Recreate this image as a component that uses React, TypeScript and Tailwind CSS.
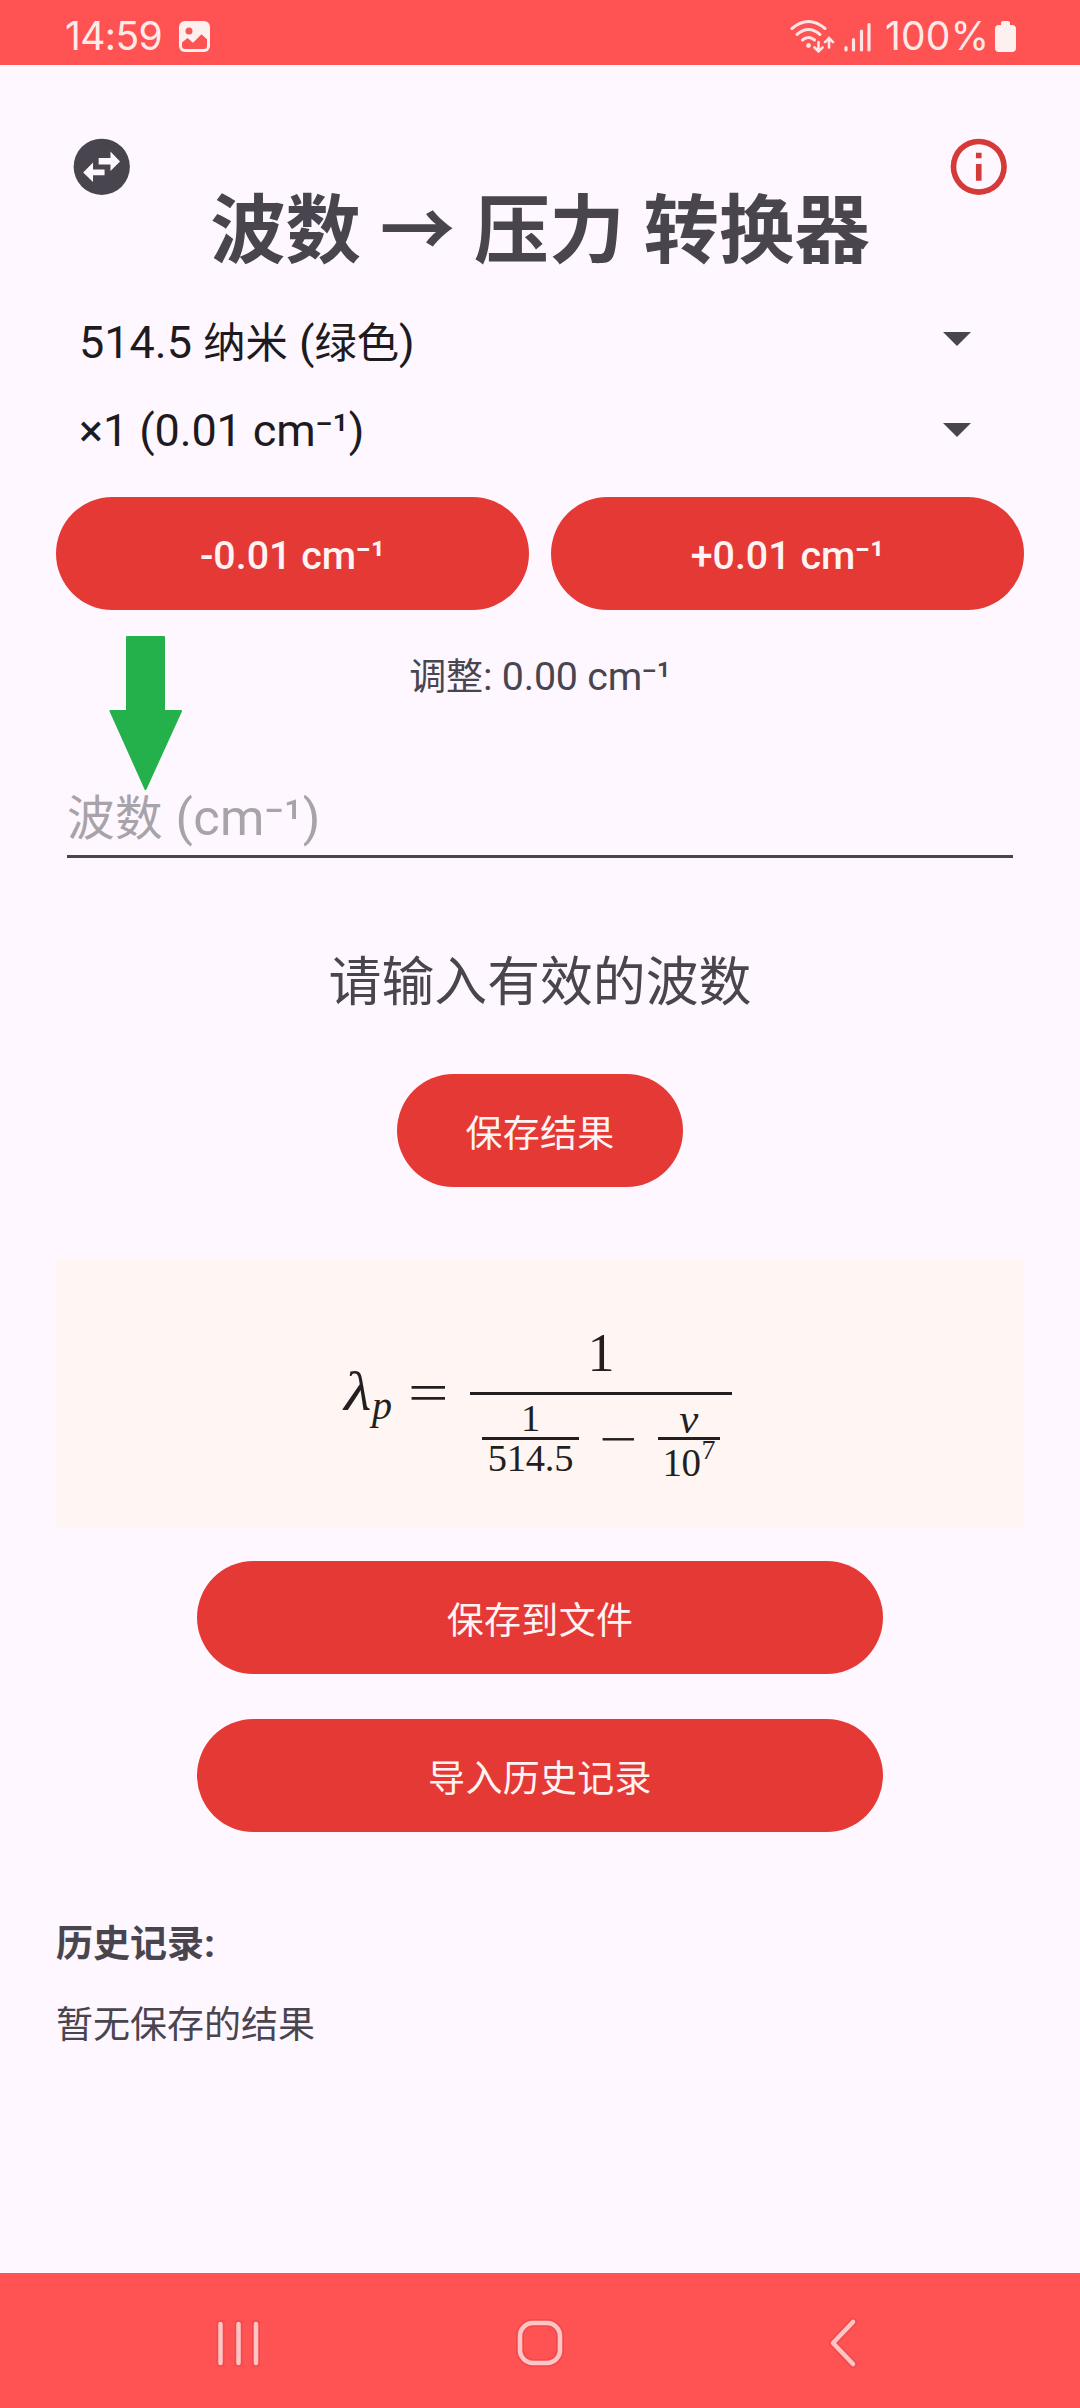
import type { ReactNode } from "react";

/** Chinese run, slightly smaller than the Latin text around it. */
function Zh({ children }: { children: ReactNode }) {
  return <span className="text-[0.94em] leading-[0]">{children}</span>;
}

function StatusBar() {
  return (
    <header className="flex h-[65px] items-center bg-[#ff5252] pl-[65px] pr-[64px] text-[#ffeaea]">
      <span className="mt-[6px] w-[102px] whitespace-nowrap font-[Inter] text-[39px] leading-[44px] tracking-[-0.6px]">14:59</span>
      <svg className="ml-[12px] mt-[8px] h-[31px] w-[31px]" viewBox="0 0 31 31">
        <rect width="31" height="31" rx="6" fill="#fff0f0" />
        <circle cx="10" cy="10" r="3.5" fill="#f45757" />
        <path d="M3 21.5 8.5 17l5.5 4.8 8.5-8.6 5.5 5V25q0 3-3 3H6q-3 0-3-3Z" fill="#ff5252" />
      </svg>
      <div className="ml-auto flex items-center">
        <svg className="mt-[6px] h-[34px] w-[84px]" viewBox="0 0 84 34" fill="none" stroke="#ffe6e6" strokeLinecap="round">
          <g strokeWidth="3">
            <path d="M3 9.5q16.500-14 33 0" />
            <path d="M8 15.500q11.500-10 23 0" />
            <path d="M13.500 21q6-5 12 0" />
            <path d="M29.500 23v9m-4-3.500 4 3.800 4-3.800M40 28.500v-9m-4 3.600 4-4 4 4" strokeWidth="2.600" />
            <path d="M57 28.500v2.500M64.500 20.500v10.500M72.500 12v19M80 5.500v25.500" strokeWidth="3.200" />
          </g>
          <circle cx="19.500" cy="26.500" r="2.400" fill="#ffe6e6" stroke="none" />
        </svg>
        <span className="ml-[12px] mt-[6px] w-[110px] whitespace-nowrap font-[Inter] text-[39px] leading-[44px] tracking-[0.2px]">100%</span>
        <svg className="mt-[7px] h-[31px] w-[21px]" viewBox="0 0 21 31">
          <path d="M6 4V2q0-2 2-2h5q2 0 2 2v2h2q4 0 4 4v19q0 4-4 4H4q-4 0-4-4V8q0-4 4-4Z" fill="#fff0f0" />
        </svg>
      </div>
    </header>
  );
}

function Spinner({ children, caret }: { children: ReactNode; caret: string }) {
  return (
    <button className="flex h-[60px] w-full items-start justify-between pl-[23px] pr-[53px] text-left text-[45px] leading-[60px] text-[#1d1b20]">
      <span className="whitespace-pre">{children}</span>
      <svg className={caret} viewBox="0 0 28 14">
        <path d="M0 0h28L14 14Z" fill="#49454f" />
      </svg>
    </button>
  );
}

function Pill({ children, size }: { children: ReactNode; size: string }) {
  return (
    <button className={`flex h-[113px] items-center justify-center rounded-full bg-[#e53935] text-[39.375px] text-[#fff3f3] ${size}`}>
      <span className="mt-[4px] whitespace-pre">{children}</span>
    </button>
  );
}

function Formula() {
  return (
    <section className="mt-[73px] flex h-[267px] justify-center bg-[#fff5f3] font-['Liberation_Serif'] text-[#231f20]">
      <div className="flex w-[392px]">
        <div className="relative w-[64px] italic">
          <span className="mt-[104px] block origin-left scale-x-[1.15] text-[55px] leading-[55px]">λ</span>
          <span className="absolute left-[28px] top-[126px] text-[40px] leading-[40px]">p</span>
        </div>
        <span className="mt-[106px] h-[54px] w-[62px] origin-left scale-x-[1.33] text-[54px] leading-[54px]">=</span>
        <div className="flex w-[262px] flex-col items-center">
          <span className="mt-[66px] h-[66px] text-[54px] leading-[54px]">1</span>
          <div className="h-[3px] w-full bg-current" />
          <div className="flex w-full justify-between px-[12px]">
            <div className="flex w-[97px] flex-col items-center text-[38.500px] leading-[39px]">
              <span className="mt-[4px] h-[38px]">1</span>
              <div className="h-[3px] w-full bg-current" />
              <span className="-mt-px tracking-[-0.2px]">514.5</span>
            </div>
            <span className="mt-[19px] h-[50px] scale-x-[1.35] text-[50px] leading-[50px]">−</span>
            <div className="flex w-[62px] flex-col items-center text-[39px] leading-[39px]">
              <span className="mt-[5px] h-[37px] scale-x-[1.1] italic">ν</span>
              <div className="h-[3px] w-full bg-current" />
              <span className="relative mt-[3px] -ml-[15px] tracking-[-0.6px]">
                10
                <span className="absolute left-full -top-[7px] ml-px text-[28px] leading-[28px]">7</span>
              </span>
            </div>
          </div>
        </div>
      </div>
    </section>
  );
}

function NavBar() {
  return (
    <nav className="mt-auto flex h-[135px] items-center justify-between bg-[#ff5252] px-[214px]">
      <svg className="mt-[5px] h-[52px] w-[50px]" viewBox="0 0 50 52" fill="none" strokeLinecap="round">
        <path d="M6.500 7v39M24.500 7v39M42 7v39" stroke="#f04c4e" strokeWidth="8" />
        <path d="M6.500 7v39M24.500 7v39M42 7v39" stroke="#ffc4c4" strokeWidth="4.500" />
      </svg>
      <svg className="-ml-[9px] mt-[5px] h-[52px] w-[52px]" viewBox="0 0 52 52" fill="none">
        <rect x="6" y="6" width="40" height="40" rx="13" stroke="#f04c4e" strokeWidth="8" />
        <rect x="6" y="6" width="40" height="40" rx="13" stroke="#ffc4c4" strokeWidth="4.500" />
      </svg>
      <svg className="mt-[5px] h-[54px] w-[41px]" viewBox="0 0 41 54" fill="none" strokeLinecap="round" strokeLinejoin="round">
        <path d="M28 6 8 27l20 21" stroke="#f04c4e" strokeWidth="8" />
        <path d="M28 6 8 27l20 21" stroke="#ffc4c4" strokeWidth="4.500" />
      </svg>
    </nav>
  );
}

export default function App() {
  return (
    <div className="flex h-[2408px] w-[1080px] flex-col overflow-hidden bg-[#fef7ff] font-[Roboto,'Noto_Sans_CJK_SC',sans-serif] text-[#49454f]">
      <StatusBar />
      <main className="flex flex-col px-[56px]">
        <div className="mt-[68px] flex h-[180px] items-start justify-between pl-[12px] pr-[12px]">
          <svg className="h-[67.500px] w-[67.500px]" viewBox="0 0 24 24">
            <circle cx="12" cy="12" r="10" fill="#49454f" />
            <path d="M18.500 10.100 15.100 13.500V11.200H10.900V8.900h4.200V6.600ZM5.400 14l3.500-3.500V13H13v2H8.900v2.400Z" fill="#fef7ff" />
          </svg>
          <h1 className="mt-[47px] whitespace-pre text-[80.250px] font-bold leading-[100px]">
            <Zh>波数 → 压力 转换器</Zh>
          </h1>
          <svg className="h-[67.500px] w-[67.500px]" viewBox="0 0 24 24" fill="#d43a38">
            <path d="M11 7h2v2h-2zm0 4h2v6h-2zm1-9a10 10 0 1 0 0 20 10 10 0 0 0 0-20m0 18a8 8 0 1 1 0-16 8 8 0 0 1 0 16" />
          </svg>
        </div>

        <Spinner caret="mt-[19px] h-[14px] w-[28px]">
          514.5 <Zh>纳米</Zh> (<Zh>绿色</Zh>)
        </Spinner>
        <div className="mt-[28px] tracking-[-0.1px]">
          <Spinner caret="mt-[22px] h-[14px] w-[28px]">×1 (0.01 cm⁻¹)</Spinner>
        </div>

        <div className="mt-[36px] flex gap-[22px]">
          <Pill size="flex-1 font-medium">-0.01 cm⁻¹</Pill>
          <Pill size="flex-1 font-medium">+0.01 cm⁻¹</Pill>
        </div>

        <p className="mt-[47px] whitespace-pre text-center text-[39.375px] leading-[40px] tracking-[-0.2px]">
          <Zh>调整</Zh>: 0.00 cm⁻¹
        </p>

        <div className="relative mx-[11px] mt-[91px] h-[70px] border-b-[3px] border-[#49454f]">
          <div className="whitespace-pre text-[50.625px] leading-[60px] tracking-[0.3px] text-[#a8a3a9]">
            <Zh>波数</Zh> (cm⁻¹)
          </div>
          <svg className="absolute left-[42px] -top-[152px] h-[154px] w-[74px]" viewBox="0 0 74 154">
            <path d="M18 1h37v74h17L36.500 153 1.500 75H18Z" fill="#24b14c" stroke="#24b14c" strokeWidth="2" strokeLinejoin="round" />
          </svg>
        </div>

        <p className="mt-[89px] text-center text-[56.250px] leading-[70px]">
          <Zh>请输入有效的波数</Zh>
        </p>
        <Pill size="mt-[57px] w-[286px] self-center pt-[2px] tracking-[0.3px]">
          <Zh>保存结果</Zh>
        </Pill>

        <Formula />

        <div className="mt-[34px] flex flex-col items-center gap-[45px]">
          <Pill size="w-[686px] pt-[2px] tracking-[0.3px]">
            <Zh>保存到文件</Zh>
          </Pill>
          <Pill size="w-[686px] pt-[2px] tracking-[0.3px]">
            <Zh>导入历史记录</Zh>
          </Pill>
        </div>

        <h2 className="mt-[92px] text-[39.375px] font-bold leading-[40px]">
          <Zh>历史记录</Zh>:
        </h2>
        <p className="mt-[41px] text-[39.375px] leading-[40px]">
          <Zh>暂无保存的结果</Zh>
        </p>
      </main>
      <NavBar />
    </div>
  );
}
